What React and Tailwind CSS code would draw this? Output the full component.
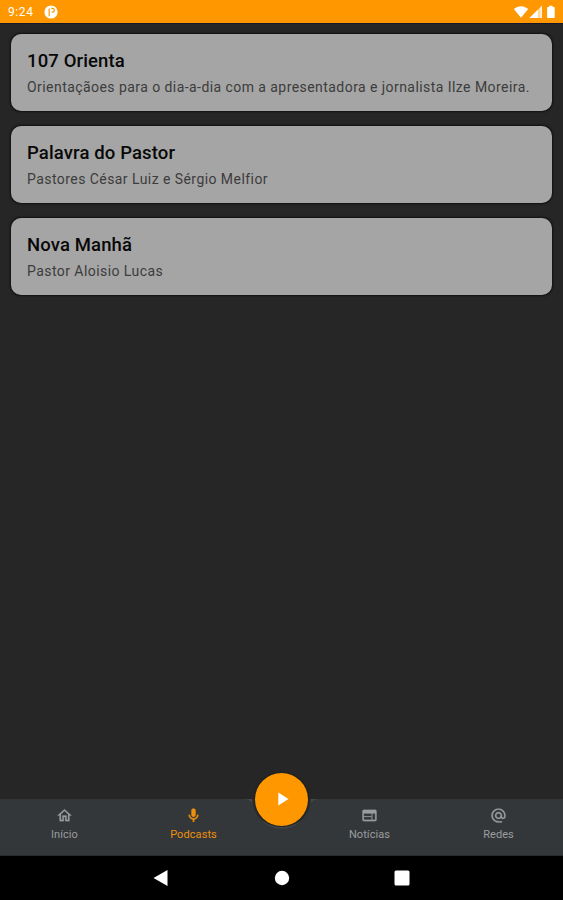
import React from "react";
import { MdPlayArrow } from "react-icons/md";

const podcasts = [
  {
    id: 1,
    title: "107 Orienta",
    description: "Orientaçãoes para o dia-a-dia com a apresentadora e jornalista Ilze Moreira.",
  },
  { id: 2, title: "Palavra do Pastor", description: "Pastores César Luiz e Sérgio Melfior" },
  { id: 3, title: "Nova Manhã", description: "Pastor Aloisio Lucas" },
];

const icons = {
  home: "M12 5.69L17 10.19V18H15V12H9V18H7V10.19L12 5.69M12 3L2 12H5V20H11V14H13V20H19V12H22L12 3",
  mic: "M12 14c1.660 0 3-1.340 3-3V5c0-1.660-1.340-3-3-3S9 3.340 9 5v6c0 1.660 1.340 3 3 3zM17 11c0 2.760-2.240 5-5 5s-5-2.240-5-5H5c0 3.530 2.610 6.430 6 6.920V21h2v-3.080c3.390-.490 6-3.390 6-6.920h-2z",
  web: "M20 4H4c-1.100 0-2 .9-2 2v12c0 1.100.9 2 2 2h16c1.100 0 2-.9 2-2V6c0-1.100-.9-2-2-2zM15 18H4v-4h11v4zM15 13H4V9h11v4zM20 18h-4V9h4v9z",
  at: "M12 2C6.480 2 2 6.480 2 12s4.480 10 10 10h5v-2h-5c-4.340 0-8-3.660-8-8s3.660-8 8-8 8 3.660 8 8v1.430c0 .790-.710 1.570-1.500 1.570s-1.500-.780-1.500-1.570V12c0-2.760-2.240-5-5-5s-5 2.240-5 5 2.240 5 5 5c1.380 0 2.640-.560 3.540-1.470.65.89 1.770 1.470 2.960 1.470 1.970 0 3.500-1.600 3.500-3.570V12c0-5.520-4.480-10-10-10zm0 13c-1.660 0-3-1.340-3-3s1.340-3 3-3 3 1.340 3 3-1.340 3-3 3z",
};

const StatusBar = () => (
  <header className="h-6 shrink-0 flex items-center justify-between bg-[#ff9800] border-b border-[#17172c] pl-2 pr-[7px] text-white">
    <div className="flex items-center gap-[10px]">
      <span className="text-[12px] leading-none tracking-[0.6px]">9:24</span>
      <svg className="w-[14px] h-[14px]" viewBox="0 0 14 14">
        <circle cx="7" cy="7" r="6.6" fill="#fff" />
        <path d="M5.200 11.200V3.500M7.200 3.400h1.200a1.900 1.900 0 0 1 0 3.800H7.600" fill="none" stroke="#ff9800" strokeWidth="1.2" />
      </svg>
    </div>
    <div className="flex items-center">
      <svg className="w-[43px] h-[14px]" viewBox="0 0 43 14" fill="#fff">
        <path d="M.8 4.1C4.8.2 11.200.2 15.200 4.100L8 12.700z" />
        <path d="M16.500 13L28.800.700V13z" fillOpacity=".62" />
        <path d="M16.500 13L24.800 4.700V13zM27.500 2L28.800.700V13h-1.300z" />
        <path d="M36.200.7h3.400v1.400h1.100c.6 0 1 .4 1 1v9c0 .6-.4 1-1 1h-5.600c-.6 0-1-.4-1-1v-9c0-.6.4-1 1-1h1.100z" />
      </svg>
    </div>
  </header>
);

const PodcastCard = ({ title, description }) => (
  <article className="h-[77px] rounded-[10px] bg-[#a5a5a5] pl-4 pt-[15px] shadow-[0_0_2px_1px_#101010]">
    <h2 className="text-[18.5px] leading-6 font-medium tracking-[0.13px] text-[#080808]">{title}</h2>
    <p className="mt-[4px] text-[14px] leading-5 tracking-[0.44px] text-[#3c3c3c] whitespace-nowrap">{description}</p>
  </article>
);

const NavItem = ({ icon, label, active }) => (
  <button
    type="button"
    className={`w-[129px] h-full flex flex-col items-center pt-2 ${active ? "text-[#ee900d]" : "text-[#9b9d9f]"}`}
  >
    <svg className="w-[17px] h-[17px]" viewBox="0 0 24 24" fill="currentColor" stroke="currentColor" strokeWidth="0.3">
      <path d={icons[icon]} />
    </svg>
    <span className="mt-[4px] text-[11px] leading-[13px] tracking-[0.08px]">{label}</span>
  </button>
);

const BottomBar = () => (
  <nav className="relative h-[57px] shrink-0 flex justify-between bg-[#33373a] border-b border-[#282b2d]">
    <div className="flex">
      <NavItem icon="home" label="Início" />
      <NavItem icon="mic" label="Podcasts" active />
    </div>
    <div className="flex">
      <NavItem icon="web" label="Notícias" />
      <NavItem icon="at" label="Redes" />
    </div>

    {/* Notch and play button */}
    <svg className="absolute left-[241px] top-0 w-20 h-[31px]" viewBox="0 0 80 31">
      <path d="M3 0C9 0 11 3 13 8C18 22 27 29.500 40.500 29.500S63 22 68 8C70 3 72 0 78 0" fill="#454949" />
      <path d="M11 0C12 19 26 28 40.500 28S69 19 70 0z" fill="#292d2f" />
    </svg>
    <button
      type="button"
      aria-label="Reproduzir"
      className="absolute left-[255px] top-[-26px] w-[53px] h-[53px] rounded-full bg-[#ff9800] flex items-center justify-center text-white shadow-[0_0_2px_#111]"
    >
      <MdPlayArrow className="w-[22px] h-[22px] -mt-px" />
    </button>
  </nav>
);

const SystemNav = () => (
  <footer className="h-11 shrink-0 bg-black flex items-center justify-center">
    <svg className="w-[260px] h-5" viewBox="0 0 260 20" fill="#fff">
      <path d="M1.500 10L15.500 2v16z" />
      <circle cx="130" cy="10" r="7.200" />
      <rect x="242.500" y="2.500" width="15" height="15" rx="1.500" />
    </svg>
  </footer>
);

const App = () => {
  return (
    <div className="h-screen flex flex-col overflow-hidden bg-[#262626] font-['Roboto',sans-serif]">
      <StatusBar />
      <main className="flex-1 flex flex-col gap-[15px] px-[11px] pt-[10px]">
        {podcasts.map((p) => (
          <PodcastCard key={p.id} title={p.title} description={p.description} />
        ))}
      </main>
      <BottomBar />
      <SystemNav />
    </div>
  );
};

export default App;
